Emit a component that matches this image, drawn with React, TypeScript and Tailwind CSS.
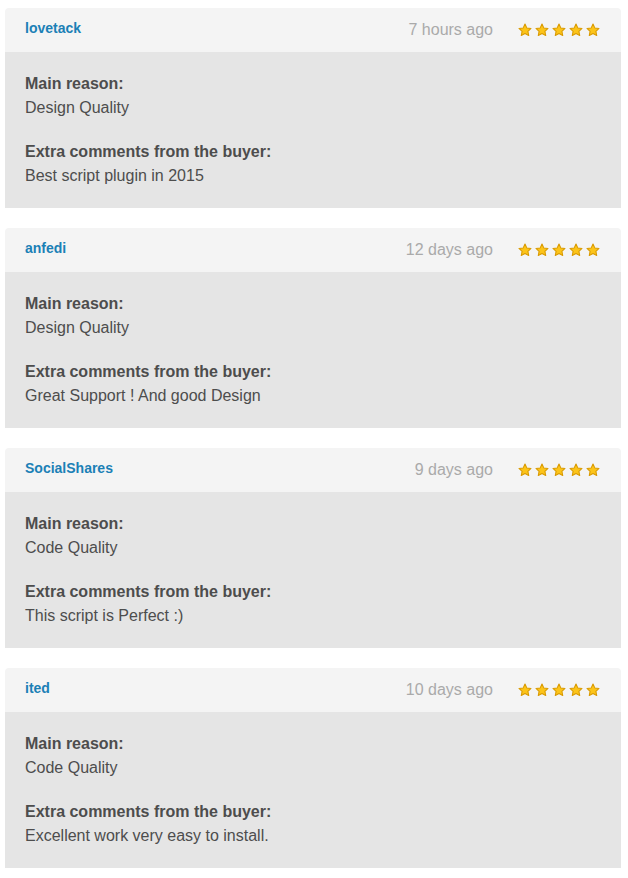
const reviews = [
  { user: 'lovetack', time: '7 hours ago', reason: 'Design Quality', comment: 'Best script plugin in 2015' },
  { user: 'anfedi', time: '12 days ago', reason: 'Design Quality', comment: 'Great Support ! And good Design' },
  { user: 'SocialShares', time: '9 days ago', reason: 'Code Quality', comment: 'This script is Perfect :)' },
  { user: 'ited', time: '10 days ago', reason: 'Code Quality', comment: 'Excellent work very easy to install.' },
];

function Star() {
  return (
    <svg width="14" height="14" viewBox="0 0 24 24">
      <path
        d="M12 1.8l3.1 6.6 7.2.9-5.3 5 1.4 7.1L12 17.9l-6.4 3.5 1.4-7.1-5.3-5 7.2-.9z"
        fill="#fcc419"
        stroke="#d99a00"
        strokeWidth="1.8"
        strokeLinejoin="round"
      />
    </svg>
  );
}

export default function App() {
  return (
    <div
      className="min-h-[878px] bg-white pt-[8px] pl-[5px] pr-[7px] flex flex-col gap-[20px]"
      style={{ fontFamily: '"Liberation Sans", Arial, sans-serif' }}
    >
      {reviews.map((r) => (
        <div key={r.user} className="w-[616px]">
          <div className="h-[44px] bg-[#f4f4f4] rounded-t-[4px] flex items-center pl-[20px] pr-[21px]">
            <span className="text-[14px] font-bold text-[#1b80b6] -mt-[4px]">{r.user}</span>
            <span className="ml-auto text-[16px] text-[#aaaaaa]">{r.time}</span>
            <div className="ml-[25px] flex gap-[3px]">
              {[0, 1, 2, 3, 4].map((i) => (
                <Star key={i} />
              ))}
            </div>
          </div>
          <div className="h-[156px] bg-[#e5e5e5] pt-[20px] px-[20px] text-[16px] leading-[24px] text-[#4d4d4d]">
            <div className="font-bold">Main reason:</div>
            <div>{r.reason}</div>
            <div className="font-bold mt-[20px]">Extra comments from the buyer:</div>
            <div>{r.comment}</div>
          </div>
        </div>
      ))}
    </div>
  );
}
